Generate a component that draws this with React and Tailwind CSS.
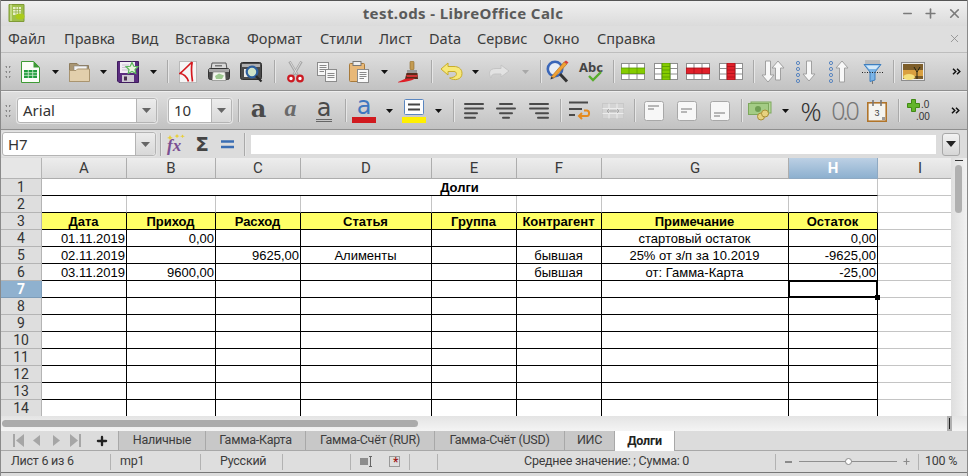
import React from "react";
import { Minus, Plus, X } from "lucide-react";

const ui = "font-['Noto_Sans',sans-serif]";
const small = "font-['Roboto',sans-serif]";
const cellFont = "font-['Liberation_Sans',Arial,sans-serif]";

const Slot = ({ className = "", children }) => (
  <div className={"flex h-full shrink-0 items-center justify-center " + className}>{children}</div>
);
const Sep = ({ className = "" }) => (
  <Slot className={className}><div className="h-[23px] w-px bg-[#a9a9a9] shadow-[1px_0_0_#e6e6e6]" /></Slot>
);
const DD = ({ className = "w-[18px]", dim }) => (
  <Slot className={className}>
    <svg width="7" height="4" viewBox="0 0 7 4"><path d="M0 0H7L3.5 4Z" fill={dim ? "#a8a8a8" : "#111"} /></svg>
  </Slot>
);
const Grip = ({ className }) => (
  <Slot className={className}>
    <svg width="6" height="14" viewBox="0 0 6 14" fill="#888">
      <path d="M0 2 1 1 2 2H1ZM4 2 5 1 6 2H5Z M0 7 1 6 2 7ZM4 7 5 6 6 7Z M0 12 1 11 2 12ZM4 12 5 11 6 12Z" />
      <path d="M1 1h1v2H1zM4 1h1v2H4zM1 6h1v2H1zM4 6h1v2H4zM1 11h1v2H1zM4 11h1v2H4z" />
    </svg>
  </Slot>
);
const More = ({ className }) => (
  <Slot className={className}>
    <svg width="9" height="7" viewBox="0 0 9 7" fill="none" stroke="#111" strokeWidth="1.5"><path d="M1 .7 3.8 3.5 1 6.3M5 .7 7.8 3.5 5 6.3" /></svg>
  </Slot>
);

const IconNew = () => (
  <svg width="19" height="22" viewBox="0 0 19 22">
    <path d="M.5.5H12.5L18.5 6.5V21.5H.5Z" fill="#fbfdf8" stroke="#3e9a35" />
    <path d="M12.5 0 19 6.5H12.5Z" fill="#3e9a35" />
    <rect x="3" y="9" width="13" height="8" fill="#1f9c3c" />
    <path d="M3 11.7H16M3 14.3H16M7.3 9V17M11.7 9V17" stroke="#d5f0d5" strokeWidth=".8" />
  </svg>
);
const IconOpen = () => (
  <svg width="21" height="20" viewBox="0 0 21 20">
    <path d="M.5 19.5V1.5H8L10 3.5H19.5V19.5Z" fill="#a99673" stroke="#8e7c5c" />
    <rect x="5" y="4" width="13" height="6" fill="#f4f4f4" stroke="#888" strokeWidth=".6" />
    <path d="M.5 19.5V8.5H7L8.5 7H20.5V19.5Z" fill="#e2cfac" stroke="#a9946f" />
  </svg>
);
const IconSave = () => (
  <svg width="22" height="22" viewBox="0 0 22 22">
    <path d="M.5.5H21.5V21.5H2L.5 20Z" fill="#5b2d7f" stroke="#3f1c5e" />
    <rect x="3" y="1" width="15" height="11" fill="#f2eef4" />
    <path d="M5 4H12M5 6.5H12M5 9H12" stroke="#c2b6cc" strokeWidth=".8" />
    <rect x="5" y="14" width="12" height="7" fill="#cfcad3" />
    <rect x="7" y="15.5" width="3" height="4" fill="#49324f" />
    <path d="M15 1.5 16.8 5.3 21 5.7 18 8.5 18.8 12.5 15 10.5 11.2 12.5 12 8.5 9 5.7 13.2 5.3Z" fill="#eaf7df" stroke="#59b55a" strokeWidth="1.2" />
  </svg>
);
const IconPdf = () => (
  <svg width="18" height="22" viewBox="0 0 18 22">
    <rect x=".5" y=".5" width="17" height="21" fill="#f5f5f5" stroke="#b9b9b9" />
    <path d="M13 1C9 5 5 9 1 12.5 4 12.6 8 15.5 9.5 20.5M13.2 1C12 7 12.5 14 13.5 20.5" fill="none" stroke="#d4191f" strokeWidth="1.7" />
  </svg>
);
const IconPrint = () => (
  <svg width="22" height="20" viewBox="0 0 22 20">
    <path d="M4 1H18L19 7H3Z" fill="#d9d9d9" stroke="#555" />
    <rect x="7" y="3" width="7" height="1.5" fill="#777" />
    <rect x=".5" y="6.5" width="21" height="11" rx="2" fill="#4c4c4c" stroke="#333" />
    <rect x="1" y="7" width="20" height="3" fill="#a8a8a8" />
    <path d="M5 10H17L18 18.5H4Z" fill="#f2f5ee" stroke="#777" strokeWidth=".6" />
    <path d="M7 14 11 11.5 16 13.5 14 17H8Z" fill="#9ec990" />
  </svg>
);
const IconPreview = () => (
  <svg width="23" height="22" viewBox="0 0 23 22">
    <rect x=".5" y="1.5" width="21" height="17" rx="2" fill="#4a4a4a" stroke="#2f2f2f" />
    <rect x="2" y="3" width="18" height="3" fill="#b0b0b0" />
    <path d="M4 8H15V16H4Z" fill="#e8e8e8" />
    <circle cx="12" cy="11" r="5.3" fill="#cfe3c8" stroke="#2d5f9e" strokeWidth="2.2" />
    <path d="M16 15 21.5 20.5" stroke="#2a2a2a" strokeWidth="2.2" />
  </svg>
);
const IconCut = () => (
  <svg width="17" height="22" viewBox="0 0 17 22">
    <path d="M2.5.5 10.5 14M14.5.5 6.5 14" stroke="#a6a6a6" strokeWidth="2.6" fill="none" />
    <path d="M3 .8 10 13M14 .8 7 13" stroke="#e5e5e5" strokeWidth=".8" fill="none" />
    <circle cx="4" cy="17.5" r="2.8" fill="#fff" stroke="#cc1a22" strokeWidth="2.2" />
    <circle cx="13" cy="17.5" r="2.8" fill="#fff" stroke="#cc1a22" strokeWidth="2.2" />
  </svg>
);
const IconCopy = () => (
  <svg width="20" height="20" viewBox="0 0 20 20">
    <rect x=".5" y=".5" width="11" height="13" fill="#f7f7f7" stroke="#8b8b8b" />
    <path d="M2.5 3.5H9.5M2.5 5.5H9.5M2.5 7.5H9.5M2.5 9.5H7" stroke="#8a8a8a" />
    <rect x="8.5" y="7.5" width="11" height="12" fill="#f7f7f7" stroke="#8b8b8b" />
    <path d="M10.5 11.5H17.5M10.5 13.5H17.5M10.5 15.5H17.5" stroke="#8a8a8a" />
  </svg>
);
const IconPaste = () => (
  <svg width="20" height="22" viewBox="0 0 20 22">
    <rect x=".5" y="2.5" width="15" height="18" rx="1" fill="#e8b878" stroke="#a87a3a" />
    <rect x="4" y=".5" width="8" height="4" fill="#eee" stroke="#777" />
    <rect x="8.5" y="8.5" width="11" height="13" fill="#fafafa" stroke="#8b8b8b" />
    <path d="M10.5 11.5H17.5M10.5 13.5H17.5M10.5 15.5H17.5M10.5 17.5H15" stroke="#8a8a8a" />
  </svg>
);
const IconBrush = () => (
  <svg width="21" height="22" viewBox="0 0 21 22">
    <rect x="12" y="0" width="4" height="9" rx="1.5" fill="#c39b52" stroke="#8a6a2c" strokeWidth=".6" />
    <rect x="9" y="9" width="10" height="3" fill="#9a9a9a" />
    <path d="M8.5 12H19.5L20 18H7Z" fill="#5a2a1a" />
    <path d="M8 14H20L19 16H9Z" fill="#c33" />
    <path d="M0 21C3 19.5 6 18 9 17.5H17C14 19.5 9 21 0 21.5Z" fill="#df1f27" />
  </svg>
);
const IconUndo = () => (
  <svg width="23" height="19" viewBox="0 0 23 19">
    <path d="M8 1 1 7 8 13V9.5H14C17 9.5 17.5 13.5 14 15 12.5 15.5 11 15.8 9.5 16 14 19 22 18 22 11.5 22 6.5 18 4.5 14 4.5H8Z" fill="#f7e879" stroke="#c8ad2a" />
  </svg>
);
const IconRedo = () => (
  <svg width="22" height="15" viewBox="0 0 22 15">
    <path d="M13 1 21 7 13 13V10H8C4 10 3.5 11.5 3 14 .5 10 .5 4.5 8 4.5H13Z" fill="#e2e2e2" stroke="#c4c4c4" />
  </svg>
);
const IconFind = () => (
  <svg width="24" height="23" viewBox="0 0 24 23">
    <circle cx="9" cy="9" r="7.2" fill="#e9eef6" stroke="#3a66b8" strokeWidth="2.6" />
    <path d="M14 14 21 21.5" stroke="#333" strokeWidth="3" />
    <path d="M5 17 8 18 21 4 18 2Z" fill="#f0a135" stroke="#a86a17" strokeWidth=".6" />
    <path d="M18 2 21 4 22.5 2.5 20 .5Z" fill="#d8413c" />
    <path d="M5 17 4.5 19.5 8 18Z" fill="#333" />
  </svg>
);
const IconAbc = () => (
  <div className="relative h-[22px] w-[24px]">
    <span className={"absolute left-0 -top-[3px] text-[13px] font-bold leading-[18px] text-[#444] " + ui}>Abc</span>
    <svg className="absolute left-[9px] top-[10px]" width="14" height="11" viewBox="0 0 14 11">
      <path d="M1 5 5 9 13 1" fill="none" stroke="#58ad2d" strokeWidth="2.4" />
    </svg>
  </div>
);
const Tbl = ({ col, dark, vertical }) => (
  <svg width="24" height="17" viewBox="0 0 24 17">
    <rect x=".5" y=".5" width="23" height="16" fill="#fff" stroke="#8e8e8e" />
    <path d="M.5 5.5H23.5M.5 11H23.5M8 .5V16.5M16 .5V16.5" stroke="#8e8e8e" />
    {vertical ? (
      <>
        <rect x="8" y="0" width="8" height="17" fill={col} stroke={dark} strokeWidth=".8" />
        <path d="M8 3.5H16M8 7H16M8 10.5H16M8 14H16" stroke={dark} strokeWidth=".7" />
      </>
    ) : (
      <>
        <rect x="0" y="5" width="24" height="5.5" fill={col} stroke={dark} strokeWidth=".8" />
        <path d="M8 5V10.5M16 5V10.5" stroke={dark} strokeWidth=".7" />
      </>
    )}
  </svg>
);
const Arrow = ({ x, up, h = 22 }) => {
  const w = 6;
  const d = up
    ? `M${x} 1 ${x + w} 8H${x + 2.5}V${h}H${x - 2.5}V8H${x - w}Z`
    : `M${x} ${h} ${x + w} ${h - 7}H${x + 2.5}V1H${x - 2.5}V${h - 7}H${x - w}Z`;
  return <path d={d} fill="#f8f8f8" stroke="#a0a0a0" />;
};
const IconSort = () => (
  <svg width="24" height="23" viewBox="0 0 24 23"><Arrow x={7} /><Arrow x={17} up h={20} /></svg>
);
const Dots = () => (
  <g fill="none" stroke="#5a86c0">
    <circle cx="3" cy="3" r="1.6" /><circle cx="3" cy="9" r="1.6" /><circle cx="3" cy="15" r="1.6" /><circle cx="3" cy="21" r="1.6" />
  </g>
);
const IconAsc = () => (<svg width="21" height="24" viewBox="0 0 21 24"><Dots /><Arrow x={14} h={21} /></svg>);
const IconDesc = () => (<svg width="21" height="24" viewBox="0 0 21 24"><Dots /><Arrow x={14} up h={22} /></svg>);
const IconFilter = () => (
  <svg width="21" height="24" viewBox="0 0 21 24">
    <rect x="3" y="0" width="15" height="5" fill="#a8a8a8" opacity=".55" />
    <path d="M2 4.5H19L13 12V20L8 21.5V12Z" fill="#7bb4e6" stroke="#3f7fbf" />
    <path d="M4 5.5H17L14 9H7Z" fill="#d5e9f8" />
    <path d="M0 12.5H21" stroke="#222" strokeDasharray="1 1.5" />
    <path d="M10.5 21V24" stroke="#777" />
  </svg>
);
const IconImage = () => (
  <svg width="24" height="19" viewBox="0 0 24 19">
    <rect x=".5" y=".5" width="23" height="18" fill="#ececec" stroke="#8d8d8d" />
    <rect x="2" y="2" width="20" height="15" fill="#7d5e2a" />
    <rect x="2" y="8" width="20" height="6" fill="#d9a040" />
    <ellipse cx="8" cy="15" rx="6" ry="3" fill="#f4df7b" />
    <path d="M16 17V10L13 5M16 10 19 5" stroke="#221" strokeWidth="1" fill="none" />
  </svg>
);
const LetterA = ({ className, under }) => (
  <div className="relative flex h-[23px] w-[20px] flex-col items-center">
    <span className={"text-[24px] leading-[19px] " + className}>a</span>
    {under && <div className="absolute bottom-0 h-[3px] w-[16px] border-y border-[#666]" />}
  </div>
);
const IconFontColor = () => (
  <div className="flex w-[24px] flex-col items-center">
    <span className="h-[17px] font-['DejaVu_Sans',sans-serif] text-[24px] font-normal leading-[15px] text-[#3f78c0]">a</span>
    <div className="mt-[1px] h-[6px] w-[24px] bg-[#d11a1f]" />
  </div>
);
const IconBgColor = () => (
  <div className="flex w-[24px] flex-col items-center">
    <svg width="20" height="16" viewBox="0 0 20 16">
      <rect x=".5" y=".5" width="19" height="15" rx="1" fill="#fdfdfd" stroke="#5a86c0" />
      <path d="M4 5.5H16M4 10.5H16" stroke="#444" strokeWidth="2" />
    </svg>
    <div className="mt-[2px] h-[6px] w-[24px] bg-[#fff000]" />
  </div>
);
const Lines = ({ ws, al }) => (
  <svg width="20" height="18" viewBox="0 0 20 18">
    {ws.map((w, i) => {
      const x = al === "l" ? 0 : al === "c" ? (20 - w) / 2 : 20 - w;
      return <rect key={i} x={x} y={i * 4.6 + 1} width={w} height="2" rx="1" fill="#4a4a4a" />;
    })}
  </svg>
);
const IconWrap = () => (
  <svg width="24" height="22" viewBox="0 0 24 22" fill="none">
    <path d="M1 2.5H20M1 9H14M1 15H7" stroke="#4a4a4a" strokeWidth="2" />
    <path d="M11 16H19C21.5 16 22 11 19 10.5H16M14 13 11 16 14 19" stroke="#e58a1f" strokeWidth="2" />
  </svg>
);
const IconMerge = () => (
  <svg width="22" height="16" viewBox="0 0 22 16" fill="none" stroke="#c8c8c8">
    <rect x=".5" y=".5" width="21" height="15" fill="#d4d4d4" />
    <path d="M.5 5.5H21.5M.5 10.5H21.5M7 .5V15.5M15 .5V15.5" stroke="#ececec" />
    <path d="M5 8H17M7 6 5 8 7 10M15 6 17 8 15 10" stroke="#a8a8a8" />
  </svg>
);
const Valign = ({ y }) => (
  <svg width="20" height="20" viewBox="0 0 20 20" fill="none">
    <rect x=".5" y=".5" width="19" height="19" rx="2" fill="#f7f7f7" stroke="#a8a8a8" />
    <path d={`M4 ${y}H15M4 ${y + 3}H10`} stroke="#777" />
  </svg>
);
const IconMoney = () => (
  <svg width="24" height="20" viewBox="0 0 24 20">
    <rect x="3" y="1" width="20" height="11" fill="#b6d79a" stroke="#7da85c" />
    <rect x=".5" y="2.5" width="20" height="11" fill="#a4cc85" stroke="#7da85c" />
    <circle cx="10" cy="8" r="3" fill="#6f9e52" />
    <circle cx="13" cy="15.5" r="3.5" fill="#e7d280" stroke="#a88f36" />
    <circle cx="17" cy="12.5" r="3.5" fill="#e7d280" stroke="#a88f36" />
  </svg>
);
const IconDate = () => (
  <svg width="20" height="22" viewBox="0 0 20 22">
    <rect x=".8" y="2.8" width="18.4" height="18.4" fill="#f4f4f0" stroke="#b0742a" strokeWidth="1.6" />
    <path d="M6 0V6M14 0V6" stroke="#777" strokeWidth="1.6" />
    <rect x="15" y="17" width="3" height="3" fill="#999" />
    <text x="10" y="16" textAnchor="middle" fontSize="9" fill="#444" fontFamily="Liberation Sans">3</text>
  </svg>
);
const IconDec = () => (
  <div className="relative h-[23px] w-[24px]">
    <svg className="absolute left-0 top-0" width="13" height="13" viewBox="0 0 13 13">
      <path d="M4.5.5H8.5V4.5H12.5V8.5H8.5V12.5H4.5V8.5H.5V4.5H4.5Z" fill="#62b52a" stroke="#418a14" />
    </svg>
    <span className={"absolute left-[14px] top-0 text-[10px] leading-[11px] text-[#333] " + cellFont}>.0</span>
    <span className={"absolute left-[9px] top-[12px] text-[10px] leading-[11px] text-[#333] " + cellFont}>.00</span>
  </div>
);
const AppIcon = () => (
  <svg width="17" height="18" viewBox="0 0 17 18">
    <path d="M1 .5H16V17.5H1Z" fill="#9fc04a" stroke="#7f9a36" />
    <path d="M3 .5V17" stroke="#d8e8a8" strokeWidth="1.2" />
    <path d="M5 3H13V11H5Z" fill="#e8f0c8" />
    <path d="M5 5.5H13M5 8H13M8 3V11M10.5 3V11" stroke="#8aa83c" strokeWidth=".7" />
    <ellipse cx="12" cy="12.5" rx="4.5" ry="3" fill="#aacb1a" />
  </svg>
);
const IconFx = () => (
  <div className="relative h-[20px] w-[18px]">
    <span className="absolute left-0 top-[3px] font-['Liberation_Serif',serif] text-[17px] font-bold italic leading-[17px] text-[#7a4f92]">fx</span>
    <svg className="absolute left-0 top-0" width="18" height="6" viewBox="0 0 18 6" fill="#e8cf3a">
      <path d="M3 1 4 3 6 4 4 4.5 3 6 2 4.5 0 4 2 3ZM10 0 11 1.5 12.5 2 11 2.7 10 4 9 2.7 7.5 2 9 1.5ZM15.5 .5 16.3 1.7 18 2.2 16.3 2.8 15.5 4 14.7 2.8 13 2.2 14.7 1.7Z" />
    </svg>
  </div>
);
const Combo = ({ text, box, btn, className = "h-[25px]" }) => (
  <div className={"flex items-stretch rounded-[3px] border border-[#b4b4b4] bg-white shadow-[0_0_0_1px_#e4e4e4] " + className}>
    <div className={"flex items-center pl-[5px] text-[15px] text-[#333] " + ui + " " + box}>{text}</div>
    <div className={"flex items-center justify-center rounded-r-[3px] border-l border-[#b4b4b4] bg-gradient-to-b from-[#ececec] to-[#d8d8d8] " + btn}>
      <svg width="9" height="5" viewBox="0 0 9 5"><path d="M0 0H9L4.5 5Z" fill="#666" /></svg>
    </div>
  </div>
);

const menus = [
  ["Файл", "w-[56px]"], ["Правка", "w-[67px]"], ["Вид", "w-[44px]"], ["Вставка", "w-[72px]"], ["Формат", "w-[73px]"],
  ["Стили", "w-[59px]"], ["Лист", "w-[50px]"], ["Data", "w-[48px]"], ["Сервис", "w-[66px]"], ["Окно", "w-[54px]"], ["Справка", "w-[80px]"],
];
const cols = ["A", "B", "C", "D", "E", "F", "G", "H", "I"];
const aligns = ["text-right", "text-right", "text-right", "text-center", "text-center", "text-center", "text-center", "text-right"];
const rows = {
  3: ["Дата", "Приход", "Расход", "Статья", "Группа", "Контрагент", "Примечание", "Остаток"],
  4: ["01.11.2019", "0,00", "", "", "", "", "стартовый остаток", "0,00"],
  5: ["02.11.2019", "", "9625,00", "Алименты", "", "бывшая", "25% от з/п за 10.2019", "-9625,00"],
  6: ["03.11.2019", "9600,00", "", "", "", "бывшая", "от: Гамма-Карта", "-25,00"],
};
const rowNums = [1, 2, 3, 4, 5, 6, 7, 8, 9, 10, 11, 12, 13, 14];
const tabs = [
  ["Наличные", "w-[87px]"], ["Гамма-Карта", "w-[100px]"], ["Гамма-Счёт (RUR)", "w-[129px]"], ["Гамма-Счёт (USD)", "w-[130px]"], ["ИИС", "w-[50px]"],
];

const RowHead = ({ n }) => (
  <div className={
    "flex items-center justify-center border-r border-b text-[14px] leading-none " + small + " " +
    (n === 7 ? "border-[#7d9cb8] bg-[#8fb1cf] font-bold text-white" : "border-[#b4b4b4] bg-[#dedede] text-[#333]")
  }>{n}</div>
);

function SheetRow({ n }) {
  if (n === 1) {
    return (
      <>
        <RowHead n={n} />
        <div className={"col-span-8 border-r border-b border-r-[#c4c4c4] border-b-black text-center text-[13px] font-bold leading-[17px] text-black " + cellFont}>Долги</div>
        <div className="border-b border-[#c4c4c4]" />
      </>
    );
  }
  const data = rows[n] || [];
  return (
    <>
      <RowHead n={n} />
      {aligns.map((al, i) => (
        <div key={i} className={
          "relative truncate border-r border-b pr-[1px] text-[13px] leading-[17px] text-black " + cellFont + " " +
          (n === 2 ? "border-r-[#c4c4c4] border-b-black " : "border-black ") +
          (n === 3 ? "bg-[#ffff66] text-center font-bold" : n === 2 ? "" : al) +
          (n === 7 && i === 7 ? " overflow-visible" : "")
        }>
          {data[i] || ""}
          {n === 7 && i === 7 && (
            <div className="absolute -left-[1px] -top-[1px] h-[18px] w-[90px] border-2 border-black">
              <div className="absolute -bottom-[4px] -right-[4px] h-[5px] w-[5px] bg-black" />
            </div>
          )}
        </div>
      ))}
      <div className="border-b border-[#c4c4c4]" />
    </>
  );
}

const Nav = ({ d, dark }) => (
  <Slot className="w-[19px]">
    <svg width="11" height="13" viewBox="0 0 11 13"><path d={d} fill={dark ? "#555" : "#a6a6a6"} /></svg>
  </Slot>
);
const StatSep = ({ className }) => (
  <div className={"flex h-full shrink-0 items-center justify-end " + className}>
    <div className="h-[16px] w-px bg-[#b2b2b2]" />
  </div>
);

export default function App() {
  return (
    <div className={"flex h-[476px] w-[968px] flex-col overflow-hidden border-x border-[#8a8a8a] bg-[#dcdcdc] " + ui}>
      {/* title bar */}
      <div className="relative flex h-[26px] shrink-0 items-center justify-center border-t border-[#555] bg-gradient-to-b from-[#f0f0f0] to-[#dbdbdb] pr-[42px]">
        <div className="absolute left-[7px] top-[3px]"><AppIcon /></div>
        <span className="text-[15px] font-bold leading-none tracking-[0.4px] text-[#5a5a5a]">test.ods - LibreOffice Calc</span>
        <div className="absolute right-[5px] top-[3px] flex h-[18px] items-center gap-[9px] text-[#7a7a7a]">
          <Minus size={13} strokeWidth={2.6} />
          <Plus size={15} strokeWidth={2.6} />
          <X size={15} strokeWidth={2.6} />
        </div>
      </div>
      {/* menu */}
      <div className="relative flex h-[27px] shrink-0 items-center border-b border-[#bdbdbd] bg-[#dedede] pl-[7px] text-[14.5px] text-[#3c3c3c]">
        {menus.map(([m, w]) => <div key={m} className={w}>{m}</div>)}
        <X className="absolute right-[6px] top-[6px] text-[#8a8a8a]" size={13} strokeWidth={1.5} />
      </div>
      {/* toolbar 1 */}
      <div className="flex h-[38px] shrink-0 items-center border-b border-[#8f8f8f] bg-gradient-to-b from-[#dedede] to-[#c2c2c2]">
        <Grip className="w-[13px]" />
        <Slot className="w-[32px]"><IconNew /></Slot><DD />
        <Slot className="w-[30px]"><IconOpen /></Slot><DD />
        <Slot className="w-[32px]"><IconSave /></Slot><DD />
        <Sep className="w-[10px]" />
        <Slot className="w-[31px]"><IconPdf /></Slot>
        <Slot className="w-[32px]"><IconPrint /></Slot>
        <Slot className="w-[33px]"><IconPreview /></Slot>
        <Sep className="w-[12px]" />
        <Slot className="w-[31px]"><IconCut /></Slot>
        <Slot className="w-[32px]"><IconCopy /></Slot>
        <Slot className="w-[32px]"><IconPaste /></Slot><DD />
        <Slot className="w-[30px]"><IconBrush /></Slot>
        <Sep className="w-[16px]" />
        <Slot className="w-[24px]"><IconUndo /></Slot><DD className="w-[24px]" />
        <Slot className="w-[24px]"><IconRedo /></Slot><DD className="w-[24px] pl-[4px]" dim />
        <Sep className="w-[10px]" />
        <Slot className="w-[26px]"><IconFind /></Slot>
        <Slot className="w-[40px]"><IconAbc /></Slot>
        <Sep className="w-[4px]" />
        <Slot className="w-[36px]"><Tbl col="#86cc00" dark="#5a9a00" /></Slot>
        <Slot className="w-[30px]"><Tbl col="#86cc00" dark="#4f8f00" vertical /></Slot>
        <Slot className="w-[34px]"><Tbl col="#e0202a" dark="#a01018" /></Slot>
        <Slot className="w-[32px]"><Tbl col="#e0202a" dark="#a01018" vertical /></Slot>
        <Sep className="w-[12px]" />
        <Slot className="w-[28px]"><IconSort /></Slot>
        <Slot className="w-[36px]"><IconAsc /></Slot>
        <Slot className="w-[30px]"><IconDesc /></Slot>
        <Slot className="w-[38px]"><IconFilter /></Slot>
        <Sep className="w-[4px]" />
        <Slot className="w-[36px]"><IconImage /></Slot>
        <More className="ml-[14px] w-[23px]" />
      </div>
      {/* toolbar 2 */}
      <div className="flex h-[39px] shrink-0 items-center border-t border-t-[#eeeeee] border-b border-b-[#8f8f8f] bg-gradient-to-b from-[#dedede] to-[#c2c2c2]">
        <Grip className="w-[13px]" />
        <div className="ml-[3px]"><Combo text="Arial" box="w-[118px]" btn="w-[20px]" /></div>
        <div className="ml-[11px]"><Combo text="10" box="w-[42px]" btn="w-[20px]" /></div>
        <Sep className="w-[12px]" />
        <Slot className="w-[29px]"><LetterA className="font-['DejaVu_Serif',serif] font-bold text-[#4a4a4a]" /></Slot>
        <Slot className="w-[35px]"><LetterA className="font-['Liberation_Serif',serif] font-bold italic text-[#6a6a6a]" /></Slot>
        <Slot className="w-[32px]"><LetterA className="font-['DejaVu_Sans',sans-serif] text-[#4a4a4a]" under /></Slot>
        <Sep className="w-[10px]" />
        <Slot className="w-[28px]"><IconFontColor /></Slot><DD className="w-[22px]" />
        <Slot className="w-[28px]"><IconBgColor /></Slot><DD className="w-[20px]" />
        <Sep className="w-[10px]" />
        <Slot className="w-[32px]"><Lines ws={[20, 20, 14, 12]} al="l" /></Slot>
        <Slot className="w-[32px]"><Lines ws={[14, 20, 14, 8]} al="c" /></Slot>
        <Slot className="w-[34px]"><Lines ws={[20, 20, 14, 12]} al="r" /></Slot>
        <Sep className="w-[8px]" />
        <Slot className="w-[32px]"><IconWrap /></Slot>
        <Slot className="w-[34px]"><IconMerge /></Slot>
        <Sep className="w-[8px]" />
        <Slot className="w-[32px]"><Valign y={5} /></Slot>
        <Slot className="w-[34px]"><Valign y={8} /></Slot>
        <Slot className="w-[32px]"><Valign y={12} /></Slot>
        <Sep className="w-[10px]" />
        <Slot className="w-[28px]"><IconMoney /></Slot><DD className="w-[22px]" />
        <Slot className="w-[30px]"><span className="text-[26px] font-light leading-none text-[#333]">%</span></Slot>
        <Slot className="w-[36px]"><span className="text-[25px] font-light leading-none tracking-[-3px] text-[#777]">0.0</span></Slot>
        <Slot className="w-[30px]"><IconDate /></Slot>
        <Sep className="w-[12px]" />
        <Slot className="w-[30px]"><IconDec /></Slot>
        <More className="ml-[10px] w-[23px]" />
      </div>
      {/* formula bar */}
      <div className="flex h-[28px] shrink-0 items-center pl-[1px]">
        <Combo text="H7" box="w-[132px]" btn="w-[20px]" className="h-[24px]" />
        <Sep className="w-[9px]" />
        <Slot className="w-[22px]"><IconFx /></Slot>
        <Slot className="w-[30px]"><span className="font-['DejaVu_Sans',sans-serif] text-[20px] font-bold leading-none text-[#444]">Σ</span></Slot>
        <Slot className="w-[20px]">
          <svg width="13" height="9" viewBox="0 0 13 9"><path d="M0 1.5H13M0 7H13" stroke="#3a6db3" strokeWidth="2.4" /></svg>
        </Slot>
        <Sep className="w-[14px]" />
        <div className="h-[19px] w-[685px] bg-white" />
        <div className="ml-[6px] flex h-[23px] w-[18px] items-center justify-center rounded-[3px] border border-[#a8a8a8] bg-gradient-to-b from-[#f2f2f2] to-[#d6d6d6]">
          <svg width="10" height="6" viewBox="0 0 10 6"><path d="M0 0H10L5 6Z" fill="#222" /></svg>
        </div>
      </div>
      {/* sheet */}
      <div className="flex h-[258px] shrink-0 bg-white">
        <div className="h-[258px] w-[951px] overflow-hidden">
          <div className="grid w-[962px] grid-cols-[41px_85px_89px_85px_131px_85px_85px_187px_89px_85px] grid-rows-[21px_repeat(14,17px)]">
            <div className="border-r border-b border-[#b4b4b4] bg-[#e6e6e6]" />
            {cols.map((c) => (
              <div key={c} className={
                "flex items-center justify-center border-r border-b text-[15px] leading-none " + small + " " +
                (c === "H"
                  ? "border-[#8fa9c2] bg-gradient-to-b from-[#bcd0e4] to-[#8db0cf] font-bold text-white"
                  : "border-[#adadad] bg-gradient-to-b from-[#ededed] to-[#dcdcdc] text-[#3a3a3a]")
              }>{c}</div>
            ))}
            {rowNums.map((n) => <SheetRow key={n} n={n} />)}
          </div>
        </div>
        <div className="relative w-[16px] bg-gradient-to-r from-[#dedede] to-[#f2f2f2]">
          <div className="absolute left-[4px] top-[2px] h-[1px] w-[8px] bg-[#333]" />
          <div className="absolute left-[4px] top-[7px] h-[48px] w-[7px] rounded-full bg-[#b0b0b0]" />
        </div>
      </div>
      {/* horizontal scrollbar */}
      <div className="flex h-[15px] shrink-0 items-center bg-gradient-to-b from-[#e4e4e4] to-[#f4f4f4]">
        <div className="ml-[1px] h-[7px] w-[416px] rounded-full bg-[#ababab]" />
        <div className="ml-[529px] flex h-full w-[5px] items-center justify-center bg-[#b0b0b0]">
          <div className="h-[11px] w-px bg-[#222]" />
        </div>
      </div>
      {/* tabs */}
      <div className={"flex h-[20px] shrink-0 items-stretch border-b border-[#a8a8a8] bg-[#dcdcdc] text-[12.5px] tracking-[-0.25px] text-[#3c3c3c] " + small}>
        <div className="w-[8px]" />
        <Nav d="M0 0H2V13H0ZM11 0V13L3 6.5Z" />
        <Nav d="M8 1V12L1 6.5Z" />
        <Nav d="M2 1V12L9 6.5Z" />
        <Nav d="M0 0V13L8 6.5ZM9 0H11V13H9Z" />
        <Slot className="w-[34px] border-r border-[#a8a8a8]"><Plus size={14} strokeWidth={4} className="text-[#222]" /></Slot>
        {tabs.map(([t, w]) => (
          <div key={t} className={"flex items-center justify-center border-r border-[#a8a8a8] bg-[#c8c8c8] " + w}>{t}</div>
        ))}
        <div className="-mb-px flex w-[60px] items-center justify-center border-r border-[#a8a8a8] bg-white font-bold text-[#222]">Долги</div>
      </div>
      {/* status */}
      <div className={"flex h-[21px] shrink-0 items-center bg-[#dedede] text-[12.5px] tracking-[-0.25px] text-[#3c3c3c] " + small}>
        <div className="w-[110px] pl-[10px]">Лист 6 из 6</div>
        <StatSep className="-ml-px w-px" />
        <div className="w-[90px] pl-[9px]">mp1</div>
        <StatSep className="-ml-px w-px" />
        <div className="w-[82px] pl-[19px]">Русский</div>
        <StatSep className="-ml-px w-px" />
        <StatSep className="w-[68px]" />
        <Slot className="w-[29px]">
          <svg width="12" height="11" viewBox="0 0 12 11"><rect y="2" width="8" height="7" fill="#8d8d8d" /><path d="M9 .5H12M9 10.5H12M10.5 .5V10.5" stroke="#666" /></svg>
        </Slot>
        <Slot className="w-[29px]">
          <div className="relative h-[11px] w-[11px] border border-[#999]">
            <span className="absolute left-[3px] -top-[2px] text-[12px] font-bold leading-[14px] text-[#a01818]">*</span>
          </div>
        </Slot>
        <StatSep className="w-px" />
        <StatSep className="w-[28px]" />
        <div className="w-[337px] pl-[86px]">Среднее значение: ; Сумма: 0</div>
        <StatSep className="w-px" />
        <div className="flex h-full w-[142px] items-center">
          <div className="ml-[9px] h-[2px] w-[7px] bg-[#8a8a8a]" />
          <div className="relative ml-[7px] h-px w-[98px] bg-[#8f8f8f]">
            <div className="absolute left-[46px] -top-[3px] h-[7px] w-[7px] rounded-full border border-[#8a8a8a] bg-white" />
          </div>
          <Plus size={9} strokeWidth={3} className="ml-[5px] text-[#8a8a8a]" />
        </div>
        <StatSep className="w-px" />
        <div className="pl-[6px]">100 %</div>
      </div>
      {/* bottom edge */}
      <div className="h-[4px] shrink-0 border-t border-[#777] bg-[#dcdcdc]" />
    </div>
  );
}
